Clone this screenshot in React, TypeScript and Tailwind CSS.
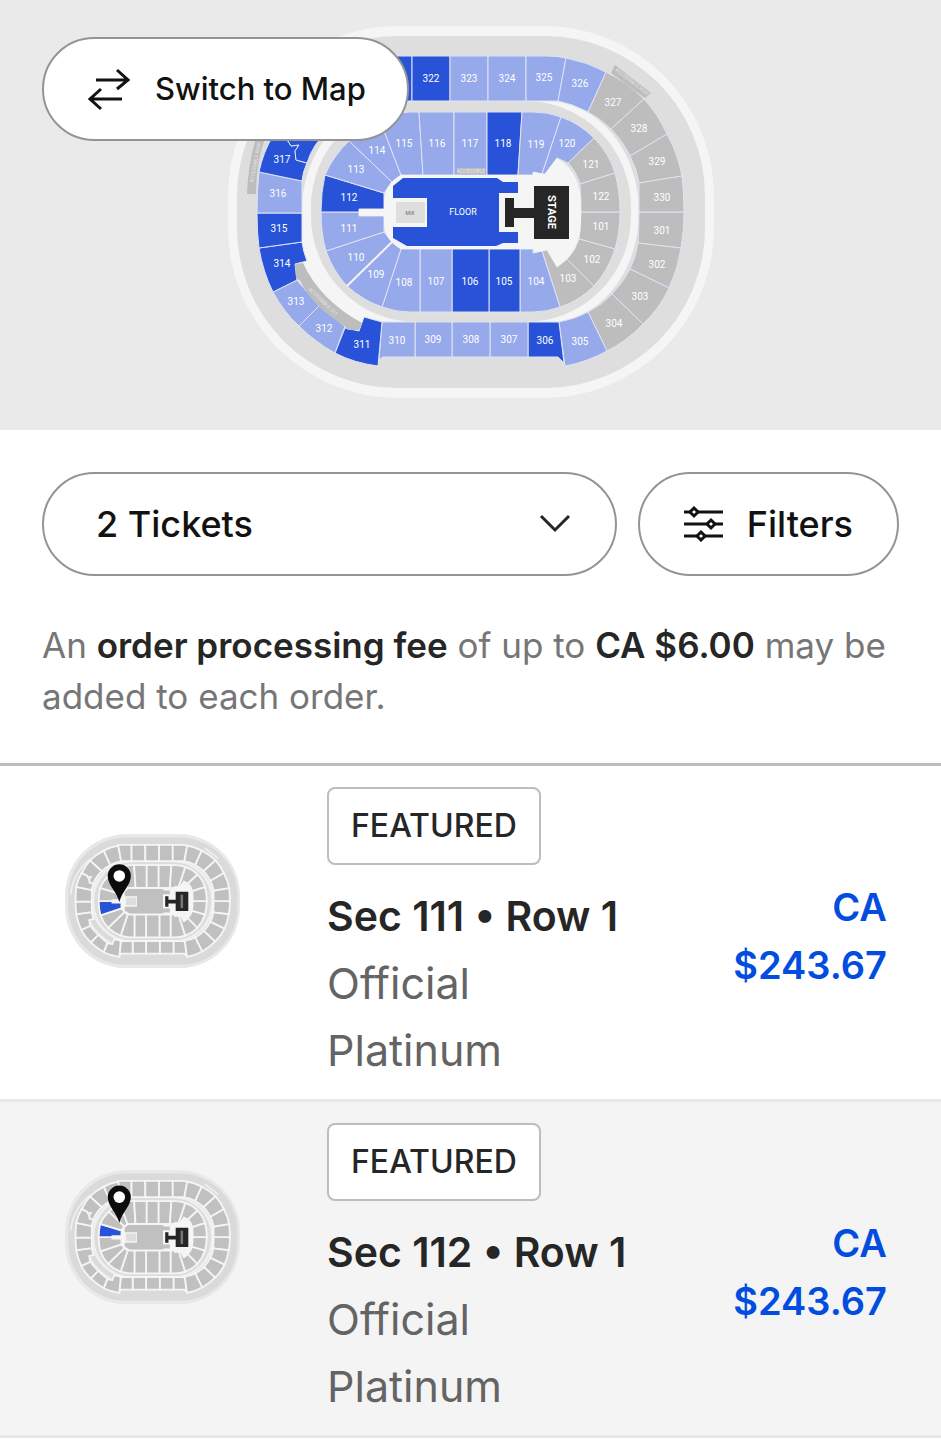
type Tone = "light" | "dark" | "off";

interface Section {
  id: string;
  tone: Tone;
  d: string;
  x: number;
  y: number;
}

interface Ticket {
  section: string;
  row: string;
  type: string;
  price: string;
  pinY: number;
}

const sections: Section[] = [
  // 300 level
  { id: "301", tone: "off", d: "M639 212 H684 Q684 231 681 248 L638 243 Q639 228 639 212Z", x: 662, y: 230 },
  { id: "302", tone: "off", d: "M638 243 L681 248 Q678 269 669 288 L630 269 Q636 257 638 243Z", x: 657, y: 264 },
  { id: "303", tone: "off", d: "M630 269 L669 288 Q660 308 643 324 L612 294 Q623 283 630 269Z", x: 640, y: 296 },
  { id: "304", tone: "off", d: "M612 294 L643 324 Q627 341 607 351 L588 312 Q602 305 612 294Z", x: 614, y: 323 },
  { id: "305", tone: "light", d: "M588 312 L607 351 Q587 362 565 366 L559 322 Q575 319 588 312Z", x: 580, y: 341 },
  { id: "306", tone: "dark", d: "M528 322 H559 L564 363 L558 357 H528Z", x: 545, y: 340 },
  { id: "307", tone: "light", d: "M490 322 H528 V357 H490Z", x: 509, y: 339 },
  { id: "308", tone: "light", d: "M452 322 H490 V357 H452Z", x: 471, y: 339 },
  { id: "309", tone: "light", d: "M415 322 H452 V357 H415Z", x: 433, y: 339 },
  { id: "310", tone: "light", d: "M382 322 H415 V357 H383 L379 360Z", x: 397, y: 340 },
  { id: "311", tone: "dark", d: "M345 328 L359 331 L364 317 L382 322 L378 366 Q354 363 335 353Z", x: 362, y: 344 },
  { id: "312", tone: "light", d: "M320 305 Q332 317 345 326 L335 353 Q315 342 299 326Z", x: 324, y: 328 },
  { id: "313", tone: "light", d: "M297 280 Q307 293 320 305 L299 326 Q283 311 273 292Z", x: 296, y: 301 },
  { id: "314", tone: "dark", d: "M259 248 L302 242 Q303 251 307 261 L295 264 L297 280 L273 292 Q263 272 259 248Z", x: 282, y: 263 },
  { id: "315", tone: "dark", d: "M257 213 H302 V242 L259 248 Q257 232 257 213Z", x: 279, y: 228 },
  { id: "316", tone: "light", d: "M259 172 L302 181 V213 H257 Q257 190 259 172Z", x: 278, y: 193 },
  { id: "317", tone: "dark", d: "M274 134 L288 141 L291 146 L299 145 L295 151 L296 160 L307 163 Q303 171 302 181 L259 172 Q263 152 274 134Z", x: 282, y: 159 },
  { id: "318", tone: "dark", d: "M297 99 L330 129 Q313 143 307 163 L296 160 L295 151 L299 145 L291 146 L288 141 L274 134 Q283 115 297 99Z", x: 300, y: 127 },
  { id: "319", tone: "dark", d: "M335 72 L353 112 Q340 119 330 129 L297 99 Q313 83 335 72Z", x: 327, y: 103 },
  { id: "320", tone: "dark", d: "M375 58 L383 101 Q367 105 353 112 L335 72 Q353 62 375 58Z", x: 360, y: 86 },
  { id: "321", tone: "dark", d: "M375 56 H412 V101 H383Z", x: 394, y: 78 },
  { id: "322", tone: "dark", d: "M412 56 H450 V101 H412Z", x: 431, y: 78 },
  { id: "323", tone: "light", d: "M450 56 H488 V101 H450Z", x: 469, y: 78 },
  { id: "324", tone: "light", d: "M488 56 H526 V101 H488Z", x: 507, y: 78 },
  { id: "325", tone: "light", d: "M526 56 H547 Q557 56 566 58 L558 101 H526Z", x: 544, y: 77 },
  { id: "326", tone: "light", d: "M566 58 Q587 62 606 72 L588 112 Q573 104 558 101Z", x: 580, y: 83 },
  { id: "327", tone: "off", d: "M606 72 Q627 82 644 99 L611 129 Q601 119 588 112Z", x: 613, y: 102 },
  { id: "328", tone: "off", d: "M644 99 Q658 114 667 134 L630 156 Q623 141 611 129Z", x: 639, y: 128 },
  { id: "329", tone: "off", d: "M667 134 Q678 154 682 176 L639 183 Q637 169 630 156Z", x: 657, y: 161 },
  { id: "330", tone: "off", d: "M682 176 Q684 194 684 212 H639 V183Z", x: 662, y: 197 },
  // 100 level
  { id: "101", tone: "off", d: "M581 212 H620 Q620 232 615 249 L579 239 Q581 228 581 212Z", x: 601, y: 226 },
  { id: "102", tone: "off", d: "M579 239 L615 249 Q609 269 594 286 L567 259 Q576 250 579 239Z", x: 592, y: 259 },
  { id: "103", tone: "off", d: "M567 259 L594 286 Q579 301 560 307 L542 251 L547 250 L557 267Z", x: 568, y: 278 },
  { id: "104", tone: "light", d: "M520 249 H533 V253 L542 251 L560 307 Q547 312 533 312 H520Z", x: 536, y: 281 },
  { id: "105", tone: "dark", d: "M489 249 H520 V312 H489Z", x: 504, y: 281 },
  { id: "106", tone: "dark", d: "M452 249 H489 V312 H452Z", x: 470, y: 281 },
  { id: "107", tone: "light", d: "M420 249 H452 V312 H420Z", x: 436, y: 281 },
  { id: "108", tone: "light", d: "M401 249 H420 V312 H410 Q396 312 382 307Z", x: 404, y: 282 },
  { id: "109", tone: "light", d: "M392 242 L401 249 L382 307 Q364 301 347 286Z", x: 376, y: 274 },
  { id: "110", tone: "light", d: "M384 232 L392 242 L347 286 Q333 271 326 251Z", x: 356, y: 257 },
  { id: "111", tone: "light", d: "M321 212 H359 V216 H384 V232 L326 251 Q321 234 321 212Z", x: 349, y: 228 },
  { id: "112", tone: "dark", d: "M325 175 L384 193 V209 H359 V212 H321 Q321 192 325 175Z", x: 349, y: 197 },
  { id: "113", tone: "light", d: "M349 141 L392 182 L384 193 L325 175 Q333 156 349 141Z", x: 356, y: 169 },
  { id: "114", tone: "light", d: "M379 118 L401 175 L392 182 L349 141 Q363 125 379 118Z", x: 377, y: 150 },
  { id: "115", tone: "light", d: "M379 118 Q394 112 410 112 H419 L423 175 H401Z", x: 404, y: 143 },
  { id: "116", tone: "light", d: "M419 112 H454 V175 H423Z", x: 437, y: 143 },
  { id: "117", tone: "light", d: "M454 112 H487 V175 H454Z", x: 470, y: 143 },
  { id: "118", tone: "dark", d: "M487 112 H522 L518 175 H487Z", x: 503, y: 143 },
  { id: "119", tone: "light", d: "M522 112 H533 Q548 112 561 117 L542 174 L533 172 V175 H518Z", x: 536, y: 144 },
  { id: "120", tone: "light", d: "M561 117 Q579 123 594 138 L568 163 L557 158 L545 174 H542Z", x: 567, y: 143 },
  { id: "121", tone: "off", d: "M594 138 Q609 153 615 173 L580 184 Q576 171 568 163Z", x: 591, y: 164 },
  { id: "122", tone: "off", d: "M615 173 Q620 191 620 212 H581 Q581 195 580 184Z", x: 601, y: 196 },
];

const tones: Record<Tone, string> = {
  light: "#96a9ea",
  dark: "#2853d8",
  off: "#bdbdbd",
};

const tickets: Ticket[] = [
  { section: "111", row: "1", type: "Official Platinum", price: "CA $243.67", pinY: 212 },
  { section: "112", row: "1", type: "Official Platinum", price: "CA $243.67", pinY: 171 },
];

function Bowl() {
  return (
    <>
      <rect x="228" y="26" width="486" height="372" rx="170" fill="#f5f5f5" />
      <rect x="237" y="36" width="468" height="352" rx="160" fill="#dedede" />
      <path d="M383 101 H547 A92 111 0 0 1 639 212 A92 111 0 0 1 547 323 H392 L364 333 L296 282 L302 212 A100 111 0 0 1 383 101Z" fill="#f5f5f5" />
      <rect x="311" y="101" width="320" height="221" rx="106" fill="#dedede" />
    </>
  );
}

function Stage({ floor }: { floor: string }) {
  return (
    <>
      <path
        d="M401 175 H533 V172 L545 174 L557 158 Q581 172 581 205 V220 Q581 252 557 267 L547 250 L534 253 V249 H401 Q384 240 384 222 V216 H359 V209 H384 V203 Q384 184 401 175Z"
        fill="#f5f5f5"
      />
      <path
        d="M393 186 L403 178 H497 L503 182 H518 V193 H499 V232 H518 V243 H503 L496 246 H407 L393 238 V227 H427 V198 H393Z"
        fill={floor}
      />
      <rect x="396" y="202" width="29" height="21" fill="#dedede" />
      <path d="M505 198 H514 V208 H534 V186 H569 V239 H534 V218 H514 V227 H505Z" fill="#262626" />
    </>
  );
}

function SeatMap() {
  return (
    <svg className="w-[487px] max-w-full" viewBox="227 26 487 372" role="img" aria-label="Seat map">
      <Bowl />
      <g stroke="#dfe3f4" strokeWidth="1">
        {sections.map((s) => (
          <path key={s.id} d={s.d} fill={tones[s.tone]} />
        ))}
      </g>
      <Stage floor="#2853d8" />
      <path d="M347 286 L392 242" stroke="#f5f5f5" strokeWidth="2" />

      {/* Accessible rows */}
      <g fill="#bdbdbd">
        <path d="M615 65 L651 93 L645 98 L611 73Z" />
        <path d="M256 138 L264 141 Q256 165 256 194 H247 Q248 164 256 138Z" />
        <path d="M295 264 L303 263 Q320 300 362 323 L359 330 L348 330 L344 325 Q314 308 300 281 L296 278Z" />
        <rect x="457" y="168" width="28" height="6" />
      </g>
      <g fill="#e6e6e6" fontFamily="Roboto, sans-serif" fontSize="5" textAnchor="middle">
        <text transform="translate(631 83) rotate(38)">ACCESSIBLE ROW</text>
        <text transform="translate(257 163) rotate(-79)">ACCESSIBLE ROW</text>
        <text transform="translate(322 303) rotate(44)">ACCESSIBLE 311</text>
        <text x="471" y="173">ACCESSIBLE</text>
      </g>

      <g fill="#fff" fontFamily="Roboto, sans-serif" fontSize="10" textAnchor="middle">
        {sections.map((s) => (
          <text key={s.id} x={s.x} y={s.y + 4}>
            {s.id}
          </text>
        ))}
        <text x="463" y="215" fontSize="9">
          FLOOR
        </text>
      </g>
      <text x="410" y="215" fill="#6b6b6b" fontFamily="Roboto, sans-serif" fontSize="5" textAnchor="middle">
        MIX
      </text>
      <text
        transform="translate(548 212) rotate(90)"
        fill="#fff"
        fontFamily="Roboto, sans-serif"
        fontSize="11"
        fontWeight="700"
        textAnchor="middle"
      >
        STAGE
      </text>
    </svg>
  );
}

function MiniMap({ active, pinY }: { active: string; pinY: number }) {
  return (
    <svg className="w-[176px]" viewBox="225 26 487 372" role="img" aria-label={`Section ${active}`}>
      <rect x="228" y="26" width="484" height="372" rx="170" fill="#e8e8e8" />
      <rect x="237" y="36" width="468" height="352" rx="160" fill="#dadada" />
      <rect x="300" y="100" width="340" height="224" rx="108" fill="#f0f0f0" />
      <rect x="309" y="104" width="323" height="216" rx="104" fill="#dcdcdc" />
      <g stroke="#f5f5f5" strokeWidth="5">
        {sections.map((s) => (
          <path key={s.id} d={s.d} fill={s.id === active ? "#2853d8" : "#c0c0c0"} />
        ))}
      </g>
      <g fill="none" stroke="#f2f2f2" strokeWidth="4">
        <path d="M244 194 Q246 140 296 96" />
        <path d="M615 65 L651 93" />
        <path d="M295 264 Q312 304 359 330" />
      </g>
      <Stage floor="#c0c0c0" />
      <path d="M551 194 V231" stroke="#777" strokeWidth="7" />
      <g transform={`translate(378 ${pinY})`}>
        <path d="M0 2 C-7 -28 -32 -44 -32 -70 A32 32 0 0 1 32 -70 C32 -44 7 -28 0 2Z" fill="#0c0c0c" />
        <circle cy="-70" r="16" fill="#fff" />
      </g>
    </svg>
  );
}

function TicketRow({ ticket, shaded }: { ticket: Ticket; shaded: boolean }) {
  return (
    <li
      className={
        shaded
          ? "flex border-b-3 border-[#e8e8e8] bg-[#f4f4f4] pt-[21px] pb-[15px] pr-[54px] pl-16"
          : "flex border-b-3 border-[#e8e8e8] bg-white pt-[21px] pb-[15px] pr-[54px] pl-16"
      }
    >
      <div className="w-[263px] shrink-0 pt-[47px]">
        <MiniMap active={ticket.section} pinY={ticket.pinY} />
      </div>
      <div className="w-[310px]">
        <div className="flex">
          <span className="flex h-[78px] items-center rounded-lg border-2 border-[#bdbdbd] bg-white px-[22px] text-[32px] font-medium text-[#262626]">
            FEATURED
          </span>
        </div>
        <h3 className="mt-[18px] text-[41px] leading-[67px] font-semibold whitespace-nowrap text-[#262626]">
          Sec {ticket.section} • Row {ticket.row}
        </h3>
        <p className="text-[43px] leading-[67px] text-[#646464]">{ticket.type}</p>
      </div>
      <p className="ml-auto w-[160px] self-center text-right text-[38px] leading-[58px] font-semibold text-[#024ddf]">
        {ticket.price}
      </p>
    </li>
  );
}

function App() {
  return (
    <main className="min-h-screen bg-white font-['Inter',sans-serif] text-[#121212]">
      <header className="relative flex justify-center bg-[#eaeaea] pt-[26px] pb-8">
        <SeatMap />
        <button
          type="button"
          className="absolute top-[37px] left-[42px] flex h-[104px] items-center gap-6 rounded-full border-2 border-[#949494] bg-white pr-[41px] pl-[43px] text-[31px] font-medium"
        >
          <svg width="44" height="44" viewBox="0 0 44 44" fill="none" stroke="currentColor" strokeWidth="3">
            <path d="M9 13 H42 M30 3 L41 13 L30 22" />
            <path d="M35 32 H2 M14 22 L3 32 L14 42" />
          </svg>
          Switch to Map
        </button>
      </header>

      <div className="flex gap-[21px] px-[42px] pt-[42px]">
        <div className="relative flex-1">
          <select
            aria-label="Number of tickets"
            defaultValue="2"
            className="h-[104px] w-full appearance-none rounded-full border-2 border-[#949494] bg-white px-[52px] text-[36px] font-medium"
          >
            <option value="1">1 Ticket</option>
            <option value="2">2 Tickets</option>
            <option value="3">3 Tickets</option>
            <option value="4">4 Tickets</option>
          </select>
          <svg
            className="pointer-events-none absolute top-[42px] right-[46px]"
            width="32"
            height="20"
            viewBox="0 0 32 20"
            fill="none"
            stroke="#262626"
            strokeWidth="3"
          >
            <path d="M2 2 L16 16 L30 2" />
          </svg>
        </div>
        <button
          type="button"
          className="flex h-[104px] items-center gap-6 rounded-full border-2 border-[#949494] bg-white px-11 text-[36px] font-medium"
        >
          <svg width="39" height="36" viewBox="0 0 39 36" fill="none" stroke="currentColor" strokeWidth="3">
            <path d="M0 6 H6 M14 6 H39 M0 18 H23 M31 18 H39 M0 30 H13 M21 30 H39" />
            <path d="M10 2 L14 6 L10 10 L6 6Z M27 14 L31 18 L27 22 L23 18Z M17 26 L21 30 L17 34 L13 30Z" />
          </svg>
          Filters
        </button>
      </div>

      <p className="px-[42px] pt-11 pb-[41px] text-[35px] leading-[51px] text-[#767676]">
        An <b className="font-semibold text-[#262626]">order processing fee</b> of up to{" "}
        <b className="font-semibold text-[#262626]">CA $6.00</b> may be added to each order.
      </p>

      <ul className="border-t-3 border-[#bdbdbd]">
        {tickets.map((ticket, i) => (
          <TicketRow key={ticket.section} ticket={ticket} shaded={i % 2 === 1} />
        ))}
      </ul>
    </main>
  );
}

export default App;
